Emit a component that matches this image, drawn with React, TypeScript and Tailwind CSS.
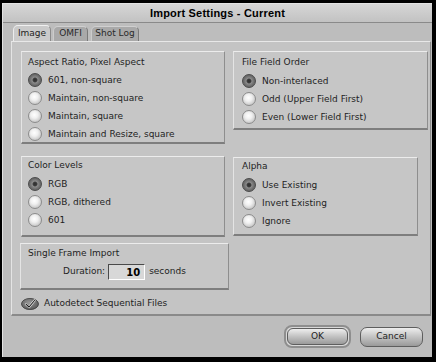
import React from 'react'

const font = { fontFamily: '"DejaVu Sans", Verdana, sans-serif' }

function Radio({ on }: { on?: boolean }) {
  return on ? (
    <span className="w-[14px] h-[14px] shrink-0 rounded-full border border-[#4a4a4a] bg-[radial-gradient(circle_at_50%_50%,#2e2e2e_0%,#3c3c3c_22%,#8a8a8a_34%,#6e6e6e_60%,#555555_100%)]" />
  ) : (
    <span className="w-[14px] h-[14px] shrink-0 rounded-full border border-[#8c8c8c] bg-[radial-gradient(circle_at_45%_40%,#ffffff_0%,#f0f0f0_35%,#c8c8c8_75%,#a4a4a4_100%)]" />
  )
}

function Option({ label, on }: { label: string; on?: boolean }) {
  return (
    <div className="flex items-center h-[18px] gap-[6px]">
      <Radio on={on} />
      <span className="text-[9px] text-[#1e1e1e] leading-none">{label}</span>
    </div>
  )
}

function Group({
  title,
  options,
  className,
  titleClass = 'h-[18px]',
}: {
  title: string
  options: string[]
  className: string
  titleClass?: string
}) {
  return (
    <div
      className={
        'bg-[#c6c6c6] border border-t-[#ececec] border-l-[#e4e4e4] border-r-[#8e8e8e] border-b-[#7e7e7e] border-b-2 pl-[6px] ' +
        className
      }
    >
      <div className={'flex items-center text-[9px] text-[#1e1e1e] ' + titleClass}>{title}</div>
      {options.map((o, i) => (
        <Option key={o} label={o} on={i === 0} />
      ))}
    </div>
  )
}

export default function App() {
  return (
    <div className="w-[436px] h-[362px] bg-black pt-[3px] pl-[2px] pr-[4px] pb-[5px]" style={font}>
      <div className="h-full flex flex-col bg-[#bdbdbd] border-l border-t border-[#e2e2e2]">
        {/* Title bar */}
        <div className="h-[19px] shrink-0 flex items-center justify-center bg-gradient-to-b from-[#d6d6d6] to-[#c2c2c2] border-b border-[#8a8a8a]">
          <span
            className="text-[11px] font-bold text-black tracking-[0.2px]"
            style={{ fontFamily: '"Liberation Sans", Arial, sans-serif' }}
          >
            Import Settings - Current
          </span>
        </div>

        {/* Tabs */}
        <div className="h-[18px] shrink-0 flex items-end pl-[10px] gap-[2px] pt-[2px]">
          <div className="w-[38px] h-[16px] rounded-t-[5px] bg-[#cacaca] border border-b-0 border-t-[#f0f0f0] border-l-[#ececec] border-r-[#8a8a8a] flex items-center justify-center text-[9px] text-[#1e1e1e]">
            Image
          </div>
          <div className="w-[35px] h-[15px] rounded-t-[5px] bg-[#a9a9a9] border border-b-0 border-t-[#d0d0d0] border-l-[#cccccc] border-r-[#7a7a7a] flex items-center justify-center text-[9px] text-[#2a2a2a]">
            OMFI
          </div>
          <div className="ml-[1px] w-[48px] h-[15px] rounded-t-[5px] bg-[#a9a9a9] border border-b-0 border-t-[#d0d0d0] border-l-[#cccccc] border-r-[#7a7a7a] flex items-center justify-center text-[9px] text-[#2a2a2a]">
            Shot Log
          </div>
        </div>

        {/* Tab panel */}
        <div className="ml-[8px] w-[420px] h-[275px] shrink-0 bg-[#c4c4c4] border border-t-[#e8e8e8] border-l-[#e4e4e4] border-r-[#8a8a8a] border-b-2 border-b-[#8a8a8a] pt-[9px] pl-[9px] flex gap-[8px]">
          <div className="w-[204px] flex flex-col">
            <Group
              title="Aspect Ratio, Pixel Aspect"
              options={['601, non-square', 'Maintain, non-square', 'Maintain, square', 'Maintain and Resize, square']}
              className="h-[93px] pt-[3px]"
              titleClass="h-[16px]"
            />
            <Group title="Color Levels" options={['RGB', 'RGB, dithered', '601']} className="h-[81px] mt-[12px]" />
            <div className="h-[47px] mt-[6px] w-[209px] -ml-[1px] bg-[#c6c6c6] border border-t-[#ececec] border-l-[#e4e4e4] border-r-[#8e8e8e] border-b-2 border-b-[#7e7e7e] pl-[7px] pt-[1px]">
              <div className="h-[18px] flex items-center text-[9px] text-[#1e1e1e]">Single Frame Import</div>
              <div className="flex items-center h-[18px] pl-[35px] text-[9px] text-[#1e1e1e]">
                <span>Duration:</span>
                <div className="ml-[3px] w-[37px] h-[16px] bg-[#d8d8d8] border border-t-[#4a4a4a] border-l-[#4a4a4a] border-r-white border-b-white flex items-center justify-end pr-[4px] text-[10px] text-black font-bold">
                  10
                </div>
                <span className="ml-[4px]">seconds</span>
              </div>
            </div>
            <div className="mt-[7px] h-[13px] flex items-center gap-[5px]">
              <svg width="18" height="12" viewBox="0 0 18 12">
                <defs>
                  <radialGradient id="cb" cx="45%" cy="40%" r="60%">
                    <stop offset="0%" stopColor="#9a9a9a" />
                    <stop offset="100%" stopColor="#5a5a5a" />
                  </radialGradient>
                </defs>
                <ellipse cx="9" cy="6" rx="8.5" ry="5.6" fill="url(#cb)" stroke="#3a3a3a" strokeWidth="0.8" />
                <path d="M5 6.2 L8 9 L13.5 2.5" fill="none" stroke="#f2f2f2" strokeWidth="2.2" strokeLinecap="round" strokeLinejoin="round" />
                <path d="M5 6.2 L8 9 L13.5 2.5" fill="none" stroke="#1a1a1a" strokeWidth="1.1" strokeLinecap="round" strokeLinejoin="round" />
              </svg>
              <span className="text-[9px] text-[#1e1e1e]">Autodetect Sequential Files</span>
            </div>
          </div>
          <div className="flex flex-col">
            <Group
              title="File Field Order"
              options={['Non-interlaced', 'Odd (Upper Field First)', 'Even (Lower Field First)']}
              className="w-[195px] h-[79px] pt-[2px] pl-[8px]"
            />
            <Group title="Alpha" options={['Use Existing', 'Invert Existing', 'Ignore']} className="w-[185px] h-[79px] mt-[27px] pl-[8px]" />
          </div>
        </div>

        {/* Buttons */}
        <div className="flex-1 flex items-center justify-end pr-[9px] gap-[9px]">
          <div className="w-[67px] h-[23px] rounded-[8px] border-2 border-[#8e8e8e] bg-[#d8d8d8] p-[1px] flex">
            <div className="flex-1 rounded-[6px] border border-[#5e5e5e] bg-gradient-to-b from-[#eeeeee] via-[#c2c2c2] to-[#9a9a9a] flex items-center justify-center text-[9px] text-[#1e1e1e]">
              OK
            </div>
          </div>
          <div className="w-[63px] h-[20px] rounded-[7px] border border-[#5e5e5e] bg-gradient-to-b from-[#eeeeee] via-[#c2c2c2] to-[#9a9a9a] flex items-center justify-center text-[9px] text-[#1e1e1e]">
            Cancel
          </div>
        </div>
      </div>
    </div>
  )
}
